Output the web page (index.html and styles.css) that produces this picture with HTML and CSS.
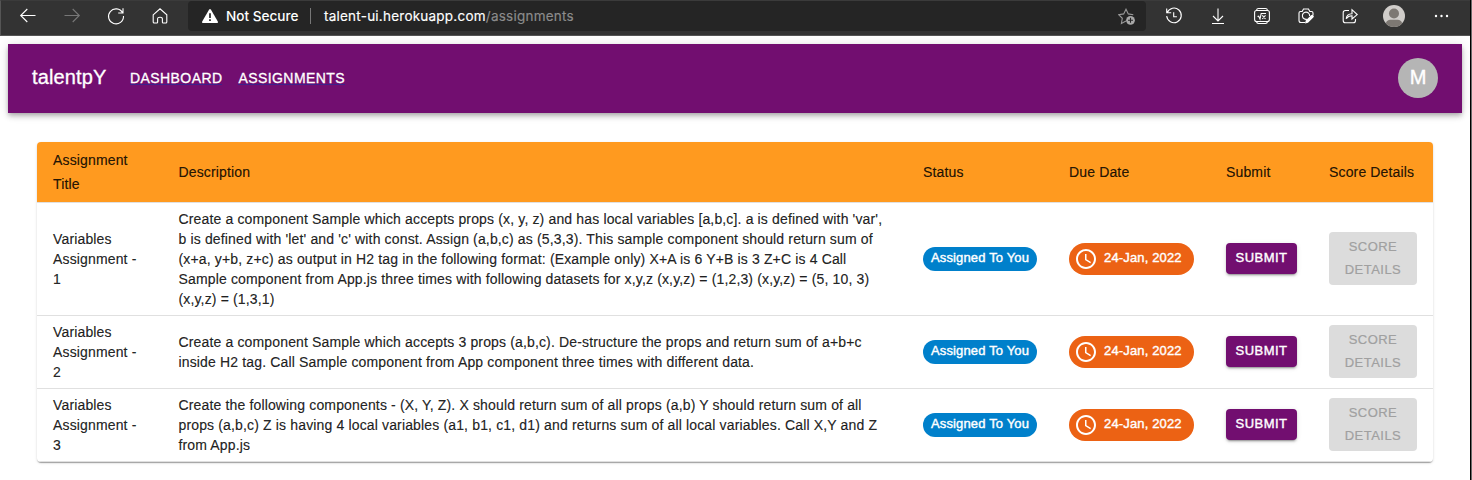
FILE: index.html
```html
<!DOCTYPE html>
<html lang="en">
<head>
<meta charset="utf-8">
<title>Assignments</title>
<link rel="stylesheet" href="styles.css">
</head>
<body>
<svg class="defs" width="0" height="0">
  <symbol id="clock" viewBox="0 0 24 24"><path d="M11.99 2C6.47 2 2 6.48 2 12s4.47 10 9.99 10C17.52 22 22 17.52 22 12S17.52 2 11.99 2zM12 20c-4.42 0-8-3.58-8-8s3.58-8 8-8 8 3.58 8 8-3.58 8-8 8zm.5-13H11v6l5.25 3.15.75-1.23-4.5-2.67z"/></symbol>
</svg>
<div class="window">
<div class="browser">
  <div class="nav-icons">
    <svg class="ico" viewBox="0 0 16 16"><path d="M15.5 7.5H.7M7.3 1L.7 7.5 7.3 14"/></svg>
    <svg class="ico dim" viewBox="0 0 16 16"><path d="M.5 7.5h14.8M8.7 1l6.600 6.500L8.700 14"/></svg>
    <svg class="ico" viewBox="0 0 16 16"><path d="M14.600 4.800A7.500 7.500 0 1 0 15.500 8M15 .3v4.700h-4.800"/></svg>
    <svg class="ico" viewBox="0 0 16 16"><path d="M1.200 6.800L8 .8l6.800 6v7.200q0 1-1 1h-2.600q-.8 0-.8-.8v-3.200q0-1.800-2.400-1.800t-2.400 1.800v3.200q0 .8-.8.8H2.200q-1 0-1-1z"/></svg>
  </div>
  <div class="address">
    <svg class="warn" viewBox="0 0 16 14"><path d="M7 .7Q8-.7 9 .7l6.800 11.800q.5 1.500-1 1.500H1.200q-1.500 0-1-1.500z" fill="#fff"/><path d="M8 4.200v4.700M8 10.200v1.800" stroke="#252525" stroke-width="1.700"/></svg>
    <span class="secure">Not Secure</span>
    <span class="sep"></span>
    <span class="url">talent-ui.herokuapp.com<span class="path">/assignments</span></span>
    <svg class="star" viewBox="0 0 18 17"><path d="M8 13l-4.600 2.400.9-5.100L.7 6.700l5-.8L8 1.200l2.300 4.700 5 .8" fill="none" stroke="#999" stroke-width="1.100"/><circle cx="12.500" cy="12.300" r="4.400" fill="#a8a8a8"/><path d="M12.500 9.800v5M10 12.300h5" stroke="#252525" stroke-width="1.100"/></svg>
  </div>
  <div class="tools">
    <svg class="ico" viewBox="0 0 16 16"><path d="M1.200 4.600A7.300 7.300 0 1 1 .7 8M.7.500v4.200H5.200M7.700 4.300v4.500h3.200"/></svg>
    <svg class="ico" viewBox="0 0 16 16"><path d="M8 .5v12.300M3 8l5 5 5-5M2 15.500h12"/></svg>
    <svg class="ico" viewBox="0 0 16 16"><rect x=".6" y="2.500" width="14.800" height="11" rx="2"/><path d="M2.500 2.300Q2.800.5 4.500.5h7q1.700 0 2 1.800M2.500 13.700q.3 1.800 2 1.800h7q1.700 0 2-1.800M3.500 8.500l1.200-.3L6 11l1.200-5.500h4.800M8.300 7.300l3.200 3.700M11.500 7.300L8.300 11"/></svg>
    <svg class="ico" viewBox="0 0 16 16"><path d="M7 14.500H3q-2 0-2-2V5q0-1.500 1.500-1.500h1.700L5.500 1h5l1.300 2.500h1.700Q15 3.500 15 5v2M9 11.200A3.600 3.600 0 1 1 11.600 8"/><path d="M15.300 7.200q1.200 1.200 0 2.300L10 14.800l-3 .7.700-3L13 7.200q1.200-1 2.300 0z" fill="#fff" stroke="none"/></svg>
    <svg class="ico" viewBox="0 0 16 16"><path d="M7 2.500H3.500Q1.200 2.500 1.200 4.800v7.700q0 2.300 2.300 2.300h7.700q2.300 0 2.300-2.300V11M4.200 10.800q.4-5 5.800-5.100V1.700l5.200 4.900L10 11V7.700q-3.800 0-5.800 3.100z"/></svg>
    <svg class="profile" viewBox="0 0 22 22"><clipPath id="disc"><circle cx="11" cy="11" r="11"/></clipPath><g clip-path="url(#disc)"><path d="M0 0h22v22H0z" fill="#d0cdca"/><circle cx="11" cy="8.500" r="5" fill="#7d7873"/><path d="M1.500 22Q3 14.800 7 14.800h8q4 0 5.500 7.200z" fill="#7d7873"/></g></svg>
    <svg class="ico dots" viewBox="0 0 16 16"><circle cx="3" cy="8" r="1.200"/><circle cx="8.500" cy="8" r="1.200"/><circle cx="14" cy="8" r="1.200"/></svg>
  </div>
</div>
<header class="appbar">
  <span class="brand">talentpY</span>
  <a class="link dash">DASHBOARD</a>
  <a class="link assign">ASSIGNMENTS</a>
  <span class="avatar">M</span>
</header>
<main class="paper">
  <div class="row head">
    <div>Assignment<br>Title</div><div>Description</div><div>Status</div><div>Due Date</div><div>Submit</div><div>Score Details</div>
  </div>
  <div class="row">
    <div>Variables<br>Assignment -<br>1</div>
    <div>Create a component Sample which accepts props (x, y, z) and has local variables [a,b,c]. a is defined with 'var',<br>b is defined with 'let' and 'c' with const. Assign (a,b,c) as (5,3,3). This sample component should return sum of<br>(x+a, y+b, z+c) as output in H2 tag in the following format: (Example only) X+A is 6 Y+B is 3 Z+C is 4 Call<br>Sample component from App.js three times with following datasets for x,y,z (x,y,z) = (1,2,3) (x,y,z) = (5, 10, 3)<br>(x,y,z) = (1,3,1)</div>
    <div><span class="chip">Assigned To You</span></div>
    <div><span class="date"><svg><use href="#clock"/></svg><span>24-Jan, 2022</span></span></div>
    <div><button class="submit">SUBMIT</button></div>
    <div><button class="score" disabled>SCORE<br>DETAILS</button></div>
  </div>
  <div class="row">
    <div>Variables<br>Assignment -<br>2</div>
    <div>Create a component Sample which accepts 3 props (a,b,c). De-structure the props and return sum of a+b+c<br>inside H2 tag. Call Sample component from App component three times with different data.</div>
    <div><span class="chip">Assigned To You</span></div>
    <div><span class="date"><svg><use href="#clock"/></svg><span>24-Jan, 2022</span></span></div>
    <div><button class="submit">SUBMIT</button></div>
    <div><button class="score" disabled>SCORE<br>DETAILS</button></div>
  </div>
  <div class="row">
    <div>Variables<br>Assignment -<br>3</div>
    <div>Create the following components - (X, Y, Z). X should return sum of all props (a,b) Y should return sum of all<br>props (a,b,c) Z is having 4 local variables (a1, b1, c1, d1) and returns sum of all local variables. Call X,Y and Z<br>from App.js</div>
    <div><span class="chip">Assigned To You</span></div>
    <div><span class="date"><svg><use href="#clock"/></svg><span>24-Jan, 2022</span></span></div>
    <div><button class="submit">SUBMIT</button></div>
    <div><button class="score" disabled>SCORE<br>DETAILS</button></div>
  </div>
</main>
</div>
</body>
</html>
```

FILE: styles.css
```css
* { box-sizing: border-box; }
body {
  margin: 0;
  height: 480px;
  overflow: hidden;
  background: #fff;
  font-family: "Liberation Sans", Arial, sans-serif;
  color: rgba(0, 0, 0, 0.87);
}
.defs { display: none; }
.window {
  height: 480px;
  border-right: 1px solid #6b6b6b;
  box-shadow: inset -1px 0 #000;
}
.browser {
  height: 36px;
  width: 1470px;
  background: #333;
  border-top: 1px solid #3b3b3b;
  border-bottom: 1px solid #555;
  border-left: 1px solid #555;
  display: flex;
  align-items: flex-start;
}
.nav-icons { display: flex; gap: 28px; padding: 7px 0 0 19px; width: 187px; }
.ico { width: 16px; height: 16px; flex: none; fill: none; stroke: #fff; stroke-width: 1.1; overflow: visible; }
.dim { stroke: #777; }
.address {
  width: 958px;
  height: 30px;
  border-radius: 4px;
  background: #252525;
  display: flex;
  align-items: center;
  font-family: Inter, sans-serif;
  font-size: 14px;
  color: #fff;
  white-space: nowrap;
}
.warn { width: 16px; height: 14px; margin: 0 8px 0 14px; }
.secure { width: 84px; font-weight: 500; font-size: 13.6px; }
.sep { width: 1px; height: 16px; background: #777; }
.url { margin-left: 13px; font-size: 13.5px; letter-spacing: .23px; -webkit-text-stroke: .15px; }
.path { color: #8c8c8c; }
.star { width: 18px; height: 17px; margin: 0 10px 0 auto; }
.tools { display: flex; gap: 28px; padding: 7px 0 0 20px; }
.profile { width: 22px; height: 22px; margin: -3px -3px 0; }
.dots { stroke: none; fill: #fff; margin-left: 3px; }
.appbar {
  height: 69px;
  width: 1454px;
  margin: 8px 0 0 8px;
  padding: 0 24px 1px;
  display: flex;
  align-items: center;
  background: #720e70;
  color: #fff;
  box-shadow: 0 2px 4px -1px rgba(0,0,0,.2), 0 4px 5px rgba(0,0,0,.14), 0 1px 10px rgba(0,0,0,.12);
}
.brand { width: 98px; padding-bottom: 1px; font-size: 20px; letter-spacing: .15px; -webkit-text-stroke: .3px; }
.link { margin-top: 1px; font-size: 14px; letter-spacing: .42px; line-height: 14px; -webkit-text-stroke: .3px; border-bottom: 1px solid #3c208c; margin-bottom: 1px; height: 14px; }
.assign { margin-left: 16px; }
.avatar { width: 40px; height: 40px; margin-left: auto; border-radius: 50%; background: #b5b5b5; font-size: 20px; line-height: 38px; text-align: center; -webkit-text-stroke: .4px; }
.paper {
  width: 1396px;
  margin: 29px 0 0 37px;
  border-radius: 4px;
  overflow: hidden;
  box-shadow: 0 2px 1px -1px rgba(0,0,0,.2), 0 1px 1px rgba(0,0,0,.14), 0 1px 3px rgba(0,0,0,.12);
}
.row {
  display: grid;
  grid-template-columns: 125.5px 744.5px 146px 157px 103px 120px;
  align-items: center;
  border-bottom: 1px solid #e0e0e0;
  font-size: 14px;
  line-height: 20px;
  letter-spacing: .15px;
  white-space: nowrap;
  -webkit-text-stroke: .2px;
}
.row > div { padding: 6px 16px; }
.row.head { background: #ff9a1f; line-height: 24px; }
.chip, .date, .submit, .score { display: flex; align-items: center; justify-content: center; }
.chip { width: 114px; height: 24px; padding-bottom: 2px; border-radius: 12px; background: #0080cb; color: #fff; font-size: 13px; -webkit-text-stroke: .4px; }
.date { width: 125px; height: 32px; border-radius: 16px; background: #ec6214; color: #fff; font-size: 13px; justify-content: flex-start; -webkit-text-stroke: .4px; }
.date svg { width: 24px; height: 24px; margin: 0 6px 0 5px; fill: #fff; stroke: none; }
.date span { padding-bottom: 2px; }
button { border: 0; border-radius: 4px; font: 13px/22.75px "Liberation Sans", Arial, sans-serif; letter-spacing: .46px; padding: 0; }
.submit { width: 71px; height: 31px; margin-bottom: 2px; padding-top: 1px; background: #720e70; color: #fff; box-shadow: 0 3px 1px -2px rgba(0,0,0,.2), 0 2px 2px rgba(0,0,0,.14), 0 1px 5px rgba(0,0,0,.12); -webkit-text-stroke: .4px; }
.score { width: 88px; height: 53px; margin-bottom: 2px; padding-top: 2px; background: #dcdcdc; color: #a0a0a0; }
```
